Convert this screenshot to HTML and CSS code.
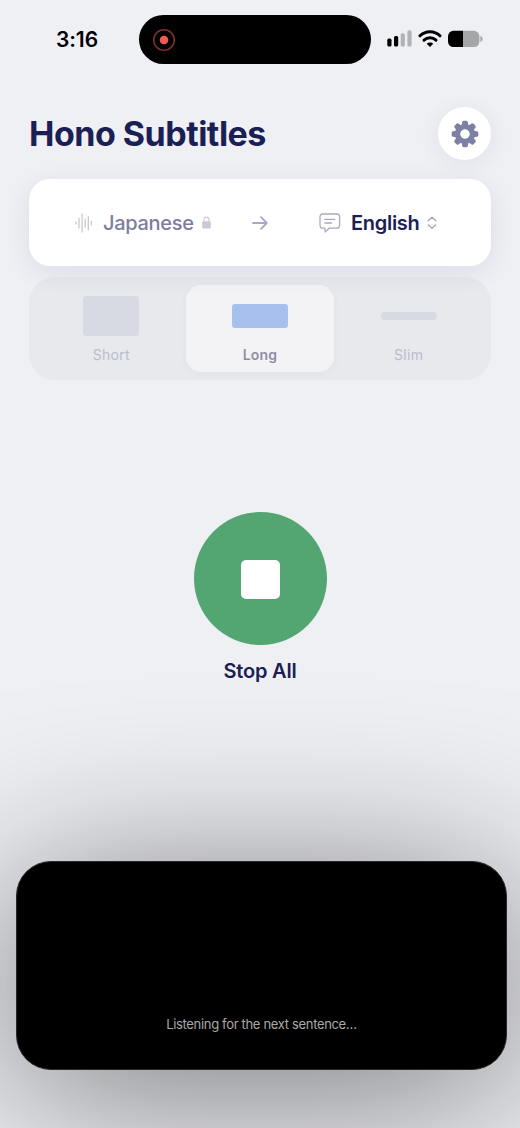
FILE: index.html
```html
<!DOCTYPE html>
<html lang="en">
<head>
<meta charset="utf-8">
<title>Hono Subtitles</title>
<link rel="stylesheet" href="styles.css">
</head>
<body>
<div class="screen">
  <div class="status">
    <div class="time">3:16</div>
    <div class="island">
      <svg class="rec" width="24" height="24" viewBox="0 0 24 24"><circle cx="12" cy="12" r="10.3" fill="none" stroke="#7d302d" stroke-width="1.6"/><circle cx="12" cy="12" r="4.3" fill="#ef5a52"/></svg>
    </div>
    <div class="indicators">
      <svg width="25" height="18" viewBox="0 0 25 18"><rect x="0.3" y="8.6" width="4.2" height="8" rx="1.6"/><rect x="7" y="6" width="4.2" height="10.6" rx="1.6"/><rect x="13.7" y="3.2" width="4.2" height="13.4" rx="1.6" fill="#b2b3b6"/><rect x="20.4" y="0.2" width="4.2" height="16.4" rx="1.6" fill="#b2b3b6"/></svg>
      <svg width="24" height="18" viewBox="0 0 24 18" fill="none" stroke="#000" stroke-width="3" stroke-linecap="round"><path d="M2 5.8C7.6.3 16.4.3 22 5.8"/><path d="M6 10.2C9.4 7 14.6 7 18 10.2"/><path d="M12 17.1L8.7 13.8C10.6 11.9 13.4 11.9 15.3 13.8Z" fill="#000" stroke="none"/></svg>
      <svg class="battery" width="36" height="18" viewBox="0 0 36 18"><path d="M16 .8H27A5.4 5.4 0 0 1 32.4 6.2V11.6A5.4 5.4 0 0 1 27 17H16Z" fill="#a5a6a8"/><path d="M16 .8H6.4A5.4 5.4 0 0 0 1 6.2V11.6A5.4 5.4 0 0 0 6.4 17H16Z"/><path d="M33.4 6C36.4 7 36.4 11 33.4 12Z" fill="#a5a6a8"/></svg>
    </div>
  </div>

  <header class="header">
    <h1 class="title">Hono Subtitles</h1>
    <button class="settings" aria-label="Settings">
      <svg width="28" height="28" viewBox="-14 -14 28 28" fill="#7c80a4">
        <defs><path id="tooth" d="M-3.3-8L-2.8-12.1Q-2.4-13.3-1.2-13.3H1.2Q2.4-13.3 2.8-12.1L3.3-8Z"/></defs>
        <use href="#tooth"/><use href="#tooth" transform="rotate(45)"/><use href="#tooth" transform="rotate(90)"/><use href="#tooth" transform="rotate(135)"/><use href="#tooth" transform="rotate(180)"/><use href="#tooth" transform="rotate(225)"/><use href="#tooth" transform="rotate(270)"/><use href="#tooth" transform="rotate(315)"/>
        <circle r="7.3" fill="none" stroke="#7c80a4" stroke-width="5.6"/>
        <circle r="4.6" fill="#fff"/>
      </svg>
    </button>
  </header>

  <section class="languages">
    <div class="lang source">
      <svg width="18" height="20" viewBox="0 0 18 20" fill="none" stroke="#c8c8d3" stroke-width="1.3" stroke-linecap="round"><path d="M1 9V11M4 5.2V14.8M7.1 1V19M10.2 6V14M13.3 3.3V16.7M16.4 8.2V11.8"/></svg>
      <span class="lang-name">Japanese</span>
      <svg class="lock" width="9" height="13" viewBox="0 0 9 13"><path d="M2 6V3.8a2.5 2.7 0 0 1 5 0V6" fill="none" stroke="#c9c8d6" stroke-width="1.1"/><rect x=".2" y="5.2" width="8.6" height="7.4" rx="1.4" fill="#c9c8d6"/></svg>
    </div>
    <svg class="arrow" width="16" height="14" viewBox="0 0 16 14" fill="none" stroke="#aaa8c6" stroke-width="1.8" stroke-linecap="round" stroke-linejoin="round"><path d="M1 7H14.6M9 1.2L14.8 7L9 12.8"/></svg>
    <div class="lang target">
      <svg class="bubble" width="22" height="20" viewBox="0 0 22 20" fill="none" stroke="#a9a9c1" stroke-width="1.3" stroke-linecap="round" stroke-linejoin="round"><path d="M4 1H17.6Q20.6 1 20.6 4V12.2Q20.6 15.2 17.6 15.2H10.2L6.6 18.6Q6 19 6 18.2V15.2H4Q1 15.2 1 12.2V4Q1 1 4 1Z"/><path d="M5.8 6.3H15.7M5.8 10H12.6"/></svg>
      <span class="lang-name">English</span>
      <svg class="chevrons" width="10" height="14" viewBox="0 0 10 14" fill="none" stroke="#a3a2bc" stroke-width="1.2" stroke-linecap="round" stroke-linejoin="round"><path d="M1.2 4.8L5 1.2L8.8 4.8M1.2 8.8L5 12.4L8.8 8.8"/></svg>
    </div>
  </section>

  <section class="sizes">
    <div class="size"><div class="preview"><i class="shape short"></i></div><span>Short</span></div>
    <div class="size active"><div class="preview"><i class="shape long"></i></div><span>Long</span></div>
    <div class="size"><div class="preview"><i class="shape slim"></i></div><span>Slim</span></div>
  </section>

  <main class="control">
    <button class="stop" aria-label="Stop All"><i class="stop-mark"></i></button>
    <div class="stop-label">Stop All</div>
  </main>

  <section class="captions"><p class="caption">Listening for the next sentence…</p></section>
</div>
</body>
</html>
```
FILE: styles.css
```css
* { box-sizing: border-box; }
body { margin: 0; background: #eff0f4; font-family: Inter, "Liberation Sans", sans-serif; }
button { border: 0; padding: 0; font: inherit; }
svg { display: block; flex: none; }
.screen { width: 520px; height: 1128px; overflow: hidden; isolation: isolate; display: flex; flex-direction: column; }

.status { height: 63px; padding-top: 15px; display: grid; grid-template-columns: 139px 232px 149px; flex: none; }
.time { height: 48px; padding-left: 15px; line-height: 49px; text-align: center; font-size: 21px; font-weight: 600; letter-spacing: -.1px; color: #000; }
.island { height: 49px; border-radius: 25px; background: #000; display: flex; align-items: center; padding-left: 13px; }
.indicators { height: 48px; display: flex; align-items: center; gap: 6px; padding-left: 16px; }
.battery { margin-left: -1.5px; }

.header { margin: 44px 29px 0; height: 53px; display: flex; align-items: center; justify-content: space-between; flex: none; }
.title { margin: 0; font-size: 34px; line-height: 54px; font-weight: 700; letter-spacing: -.5px; color: #1b2054; white-space: nowrap; }
.settings { width: 53px; height: 53px; border-radius: 50%; background: #fff; display: flex; align-items: center; justify-content: center; box-shadow: 0 4px 22px rgba(40, 40, 90, .07); }

.languages { position: relative; margin: 19px 29px 0; height: 87px; border-radius: 21px; background: #fff; box-shadow: 0 7px 26px rgba(45, 45, 110, .09); display: grid; grid-template-columns: 223px 16px 223px; align-items: center; flex: none; }
.lang { display: flex; align-items: center; }
.source { padding-left: 46px; color: #7c7d9f; }
.source .lang-name { margin-left: 10px; }
.target { padding-left: 51px; color: #1b2054; }
.target .lang-name { margin-left: 10px; }
.lang-name { font-size: 20px; line-height: 26px; font-weight: 600; letter-spacing: -.3px; }
.source .lang-name { font-weight: 500; }
.lock, .chevrons { margin-left: 8px; }

.sizes { margin: 11px 29px 0; height: 103px; padding: 8px; border-radius: 26px; background: #e7e9ed; display: grid; grid-template-columns: repeat(3, 1fr); flex: none; }
.size { display: flex; flex-direction: column; align-items: center; border-radius: 15px; font-size: 14px; line-height: 18px; letter-spacing: .3px; color: #b9bccc; padding-top: 7.5px; }
.size.active { background: #f3f3f6; color: #8f8da6; font-weight: 600; box-shadow: 0 2px 8px rgba(40, 40, 80, .04); }
.size.active span { letter-spacing: .2px; }
.preview { height: 46px; display: flex; align-items: center; margin-bottom: 7px; }
.shape { display: block; width: 56px; border-radius: 3px; background: #d7dae3; }
.short { height: 40px; }
.long { height: 24px; background: #a8c0ed; }
.slim { height: 8px; border-radius: 4px; }

.control { margin-top: 132px; display: flex; flex-direction: column; align-items: center; flex: none; }
.stop { width: 133px; height: 133px; border-radius: 50%; background: #53a571; display: flex; align-items: center; justify-content: center; }
.stop-mark { width: 39px; height: 39px; margin-top: 1px; border-radius: 5px; background: #fff; }
.stop-label { margin-top: 13px; font-size: 20px; line-height: 27px; font-weight: 600; letter-spacing: -.2px; color: #1b2054; }

.captions { position: relative; margin: 176px 13px 0 16px; height: 209px; border-radius: 35px; background: #000; border: 1px solid #292929; display: flex; justify-content: center; align-items: flex-end; padding-bottom: 35px; flex: none; }
/* Soft drop shadow spread behind the caption panel */
.captions::before { content: ""; position: absolute; z-index: -1; inset: 22px -8px -22px; border-radius: 35px; background: rgba(0, 0, 0, .52); filter: blur(90px); }
.caption { margin: 0; font-size: 13px; line-height: 20px; letter-spacing: -.33px; color: #aaa; }
```
